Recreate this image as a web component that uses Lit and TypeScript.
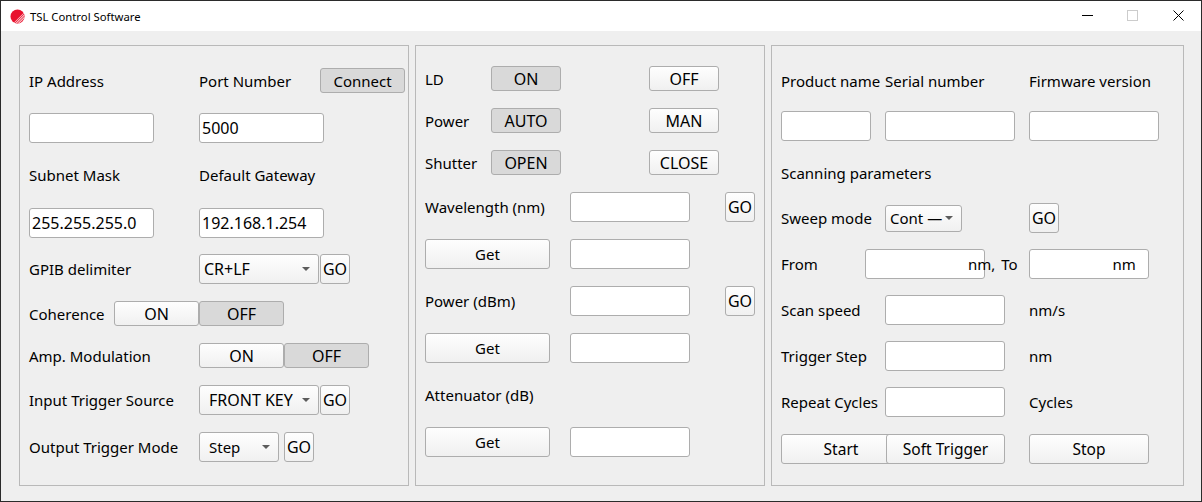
import { LitElement, css, html, svg } from 'lit'
import { customElement } from 'lit/decorators.js'

const logo = svg`
  <svg class="logo" width="15" height="15" viewBox="0 0 15 15">
    <defs>
      <clipPath id="disc"><circle cx="7.5" cy="7.5" r="7"/></clipPath>
    </defs>
    <circle cx="7.5" cy="7.5" r="7" fill="#e8112d"/>
    <g clip-path="url(#disc)">
      <path d="M15 2.5 L15 15 L2.5 15 Z" fill="#f9b4bd"/>
      <g stroke="#ea2a42" stroke-width="0.9">
        <path d="M15 4 L4 15"/>
        <path d="M15 6.5 L6.5 15"/>
        <path d="M15 9 L9 15"/>
        <path d="M15 11.5 L11.5 15"/>
      </g>
    </g>
  </svg>`

@customElement('app-root')
export class AppRoot extends LitElement {
  static styles = css`
    :host {
      display: block;
      width: 1202px;
      height: 502px;
      box-sizing: border-box;
      border: 1px solid #2b2b2b;
      background: #efefef;
      font-family: "Noto Sans", "Open Sans", sans-serif;
      font-size: 15px;
      color: #000;
      overflow: hidden;
    }
    .titlebar {
      height: 30px;
      background: #fff;
      display: flex;
      align-items: center;
      font-size: 11.3px;
      padding-left: 9px;
    }
    .logo { margin-right: 5px; }
    .win {
      margin-left: auto;
      display: flex;
      height: 30px;
    }
    .win span {
      width: 45px;
      height: 29px;
      display: flex;
      align-items: center;
      justify-content: center;
    }
    .win span:last-child { width: 46px; }
    .win svg { display: block; }
    .panels {
      display: flex;
      gap: 6px;
      padding: 14px 0 0 18px;
    }
    .panel {
      box-sizing: border-box;
      height: 441px;
      border: 1px solid #b9b9b9;
      padding-left: 9px;
    }
    .p1 { width: 390px; padding-top: 22px; }
    .p2 { width: 350px; padding-top: 20px; }
    .p3 { width: 413px; padding-top: 22px; }
    .row {
      display: flex;
      align-items: center;
      height: 30px;
      white-space: nowrap;
    }
    .h25 { height: 25px; }
    .mt16 { margin-top: 16px; }
    .mt17 { margin-top: 17px; }
    .mt18 { margin-top: 18px; }
    .mt19 { margin-top: 19px; }
    .mt20 { margin-top: 20px; }
    .mt21 { margin-top: 21px; }
    .lbl { flex: none; }
    .w66 { width: 66px; }
    .w84 { width: 84px; }
    .w85 { width: 85px; }
    .w104 { width: 104px; }
    .w121 { width: 121px; }
    .w144 { width: 144px; }
    .w145 { width: 145px; }
    .w170 { width: 170px; }
    .btn, .field, .combo {
      box-sizing: border-box;
      flex: none;
      border: 1px solid #adadad;
      border-radius: 3px;
    }
    .btn {
      height: 25px;
      display: flex;
      align-items: center;
      justify-content: center;
      background: linear-gradient(#fefefe, #f0f0f0);
    }
    .btn.on { background: #d9d9d9; }
    .tall { height: 30px; }
    .go { width: 30px; height: 30px; font-size: 16px; }
    .t16 { font-size: 16px; }
    .t155 { font-size: 15.5px; }
    .b70 { width: 70px; }
    .b85 { width: 85px; }
    .b119 { width: 119px; }
    .b120 { width: 120px; }
    .b125 { width: 125px; }
    .field {
      height: 30px;
      background: #fff;
      padding-left: 2px;
      font-size: 16px;
      display: flex;
      align-items: center;
    }
    .f90 { width: 90px; }
    .f120 { width: 120px; }
    .f125 { width: 125px; }
    .f130 { width: 130px; }
    .combo {
      height: 30px;
      display: flex;
      align-items: center;
      position: relative;
      background: linear-gradient(#fefefe, #f0f0f0);
      padding-left: 9px;
    }
    .combo::after {
      content: "";
      position: absolute;
      right: 8px;
      top: 50%;
      margin-top: -2px;
      border-left: 4px solid transparent;
      border-right: 4px solid transparent;
      border-top: 4px solid #5c5c5c;
    }
    .c120 { width: 120px; }
    .c80 { width: 80px; }
    .c77 { width: 77px; height: 27px; padding-left: 4px; }
    .tight { padding-left: 4px; }
    .ml1 { margin-left: 1px; }
    .ml5 { margin-left: 5px; }
    .ml11 { margin-left: 11px; }
    .ml14 { margin-left: 14px; }
    .ml20 { margin-left: 20px; }
    .ml24 { margin-left: 24px; }
    .ml35 { margin-left: 35px; }
    .ml45 { margin-left: 45px; }
    .ml67 { margin-left: 67px; }
    .ml88 { margin-left: 88px; }
    .over { margin-left: -17px; position: relative; word-spacing: 2px; }
    .unit { margin-left: -36px; position: relative; }
    .soft { margin-left: -15px; position: relative; }
  `

  render () {
    return html`
      <div class="titlebar">
        ${logo}
        <span>TSL Control Software</span>
        <div class="win">
          <span><svg width="11" height="11" viewBox="0 0 11 11"><path d="M0 5.5H11" stroke="#000"/></svg></span>
          <span><svg width="11" height="11" viewBox="0 0 11 11"><rect x=".5" y=".5" width="10" height="10" fill="none" stroke="#ccc"/></svg></span>
          <span><svg width="11" height="11" viewBox="0 0 11 11"><path d="M.5 .5L10.5 10.5M10.5 .5L.5 10.5" stroke="#000"/></svg></span>
        </div>
      </div>
      <div class="panels">
        <section class="panel p1">
          <div class="row h25">
            <span class="lbl w170">IP Address</span>
            <span class="lbl w121">Port Number</span>
            <div class="btn on b85">Connect</div>
          </div>
          <div class="row mt20">
            <div class="field f125"></div>
            <div class="field f125 ml45">5000</div>
          </div>
          <div class="row h25 mt19">
            <span class="lbl w170">Subnet Mask</span>
            <span class="lbl">Default Gateway</span>
          </div>
          <div class="row mt21">
            <div class="field f125">255.255.255.0</div>
            <div class="field f125 ml45">192.168.1.254</div>
          </div>
          <div class="row mt16">
            <span class="lbl w170">GPIB delimiter</span>
            <div class="combo c120 tight t16">CR+LF</div>
            <div class="btn go ml1">GO</div>
          </div>
          <div class="row h25 mt17">
            <span class="lbl w85">Coherence</span>
            <div class="btn b85 t16">ON</div>
            <div class="btn on b85 t16">OFF</div>
          </div>
          <div class="row h25 mt17">
            <span class="lbl w170">Amp. Modulation</span>
            <div class="btn b85 t16">ON</div>
            <div class="btn on b85 t16">OFF</div>
          </div>
          <div class="row mt17">
            <span class="lbl w170">Input Trigger Source</span>
            <div class="combo c120 t16">FRONT KEY</div>
            <div class="btn go ml1">GO</div>
          </div>
          <div class="row mt17">
            <span class="lbl w170">Output Trigger Mode</span>
            <div class="combo c80">Step</div>
            <div class="btn go ml5">GO</div>
          </div>
        </section>
        <section class="panel p2">
          <div class="row h25">
            <span class="lbl w66">LD</span>
            <div class="btn on b70 t16">ON</div>
            <div class="btn b70 ml88 t16">OFF</div>
          </div>
          <div class="row h25 mt17">
            <span class="lbl w66">Power</span>
            <div class="btn on b70 t16">AUTO</div>
            <div class="btn b70 ml88 t16">MAN</div>
          </div>
          <div class="row h25 mt17">
            <span class="lbl w66">Shutter</span>
            <div class="btn on b70 t16">OPEN</div>
            <div class="btn b70 ml88 t16">CLOSE</div>
          </div>
          <div class="row mt17">
            <span class="lbl w145">Wavelength (nm)</span>
            <div class="field f120"></div>
            <div class="btn go ml35">GO</div>
          </div>
          <div class="row mt17">
            <div class="btn tall b125">Get</div>
            <div class="field f120 ml20"></div>
          </div>
          <div class="row mt17">
            <span class="lbl w145">Power (dBm)</span>
            <div class="field f120"></div>
            <div class="btn go ml35">GO</div>
          </div>
          <div class="row mt17">
            <div class="btn tall b125">Get</div>
            <div class="field f120 ml20"></div>
          </div>
          <div class="row h25 mt19">
            <span class="lbl">Attenuator (dB)</span>
          </div>
          <div class="row mt20">
            <div class="btn tall b125">Get</div>
            <div class="field f120 ml20"></div>
          </div>
        </section>
        <section class="panel p3">
          <div class="row h25">
            <span class="lbl w104">Product name</span>
            <span class="lbl w144">Serial number</span>
            <span class="lbl">Firmware version</span>
          </div>
          <div class="row mt18">
            <div class="field f90"></div>
            <div class="field f130 ml14"></div>
            <div class="field f130 ml14"></div>
          </div>
          <div class="row h25 mt19">
            <span class="lbl">Scanning parameters</span>
          </div>
          <div class="row mt18">
            <span class="lbl w104">Sweep mode</span>
            <div class="combo c77">Cont —</div>
            <div class="btn go ml67">GO</div>
          </div>
          <div class="row mt16">
            <span class="lbl w84">From</span>
            <div class="field f120"></div>
            <span class="lbl over">nm, To</span>
            <div class="field f120 ml11"></div>
            <span class="lbl unit">nm</span>
          </div>
          <div class="row mt16">
            <span class="lbl w104">Scan speed</span>
            <div class="field f120"></div>
            <span class="lbl ml24">nm/s</span>
          </div>
          <div class="row mt16">
            <span class="lbl w104">Trigger Step</span>
            <div class="field f120"></div>
            <span class="lbl ml24">nm</span>
          </div>
          <div class="row mt16">
            <span class="lbl w104">Repeat Cycles</span>
            <div class="field f120"></div>
            <span class="lbl ml24">Cycles</span>
          </div>
          <div class="row mt17">
            <div class="btn tall b120 t155">Start</div>
            <div class="btn tall b119 t155 soft">Soft Trigger</div>
            <div class="btn tall b120 ml24 t155">Stop</div>
          </div>
        </section>
      </div>
    `
  }
}
